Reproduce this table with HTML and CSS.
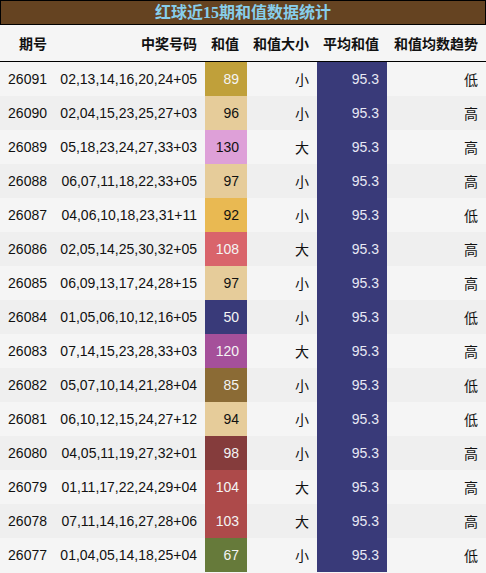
FILE: index.html
```html
<!DOCTYPE html>
<html lang="zh">
<head>
<meta charset="UTF-8">
<title>红球近15期和值数据统计</title>
<link rel="stylesheet" href="styles.css">
</head>
<body>

<div class="title">红球近15期和值数据统计</div>

<table class="stats">
  <colgroup>
    <col class="c-issue"><col class="c-nums"><col class="c-sum"><col class="c-size"><col class="c-avg"><col class="c-trend">
  </colgroup>
  <thead>
    <tr><th>期号</th><th>中奖号码</th><th>和值</th><th>和值大小</th><th>平均和值</th><th>和值均数趋势</th></tr>
  </thead>
  <tbody>
    <tr><td>26091</td><td>02,13,14,16,20,24+05</td><td class="sum s89">89</td><td>小</td><td class="avg">95.3</td><td>低</td></tr>
    <tr><td>26090</td><td>02,04,15,23,25,27+03</td><td class="sum s96">96</td><td>小</td><td class="avg">95.3</td><td>高</td></tr>
    <tr><td>26089</td><td>05,18,23,24,27,33+03</td><td class="sum s130">130</td><td>大</td><td class="avg">95.3</td><td>高</td></tr>
    <tr><td>26088</td><td>06,07,11,18,22,33+05</td><td class="sum s96">97</td><td>小</td><td class="avg">95.3</td><td>高</td></tr>
    <tr><td>26087</td><td>04,06,10,18,23,31+11</td><td class="sum s92">92</td><td>小</td><td class="avg">95.3</td><td>低</td></tr>
    <tr><td>26086</td><td>02,05,14,25,30,32+05</td><td class="sum s108">108</td><td>大</td><td class="avg">95.3</td><td>高</td></tr>
    <tr><td>26085</td><td>06,09,13,17,24,28+15</td><td class="sum s96">97</td><td>小</td><td class="avg">95.3</td><td>高</td></tr>
    <tr><td>26084</td><td>01,05,06,10,12,16+05</td><td class="sum s50">50</td><td>小</td><td class="avg">95.3</td><td>低</td></tr>
    <tr><td>26083</td><td>07,14,15,23,28,33+03</td><td class="sum s120">120</td><td>大</td><td class="avg">95.3</td><td>高</td></tr>
    <tr><td>26082</td><td>05,07,10,14,21,28+04</td><td class="sum s85">85</td><td>小</td><td class="avg">95.3</td><td>低</td></tr>
    <tr><td>26081</td><td>06,10,12,15,24,27+12</td><td class="sum s96">94</td><td>小</td><td class="avg">95.3</td><td>低</td></tr>
    <tr><td>26080</td><td>04,05,11,19,27,32+01</td><td class="sum s98">98</td><td>小</td><td class="avg">95.3</td><td>高</td></tr>
    <tr><td>26079</td><td>01,11,17,22,24,29+04</td><td class="sum s104">104</td><td>大</td><td class="avg">95.3</td><td>高</td></tr>
    <tr><td>26078</td><td>07,11,14,16,27,28+06</td><td class="sum s104">103</td><td>大</td><td class="avg">95.3</td><td>高</td></tr>
    <tr><td>26077</td><td>01,04,05,14,18,25+04</td><td class="sum s67">67</td><td>小</td><td class="avg">95.3</td><td>低</td></tr>
  </tbody>
</table>

</body>
</html>
```

FILE: styles.css
```css
body{
  margin:0; background:#f5f5f5; color:#111;
  font-family:"Liberation Sans","Noto Sans CJK SC",sans-serif;
}
.title{
  height:23px; line-height:23px;
  background:#654321; border:1px solid #000;
  color:#87ceeb; text-align:center;
  font-family:"Liberation Serif","Noto Sans CJK SC",serif;
  font-size:16px; font-weight:bold;
}
.stats{
  width:486px; border-collapse:collapse; table-layout:fixed;
  font-size:14px;
}
.c-issue{width:55px;}
.c-nums{width:150px;}
.c-sum{width:42px;}
.c-size{width:70px;}
.c-avg{width:70px;}
.c-trend{width:99px;}
.stats th, .stats td{
  padding:0 8px 0 0; text-align:right; white-space:nowrap;
}
.stats th{
  height:36px; font-weight:bold; color:#111;
  border-bottom:1px solid #000; background:#f5f5f5;
}
.stats td{height:34px;}
.stats tbody tr:nth-child(odd){background:#f5f5f5;}
.stats tbody tr:nth-child(even){background:#efefef;}

.avg{background:#393a79; color:#e8e8f4;}
.sum{color:#f4f4f4;}
.s89{background:#c0a03a;}
.s96{background:#e6cc9a; color:#111;}
.s130{background:#dea0d8; color:#111;}
.s92{background:#e9b952; color:#111;}
.s108{background:#d9646b;}
.s50{background:#393a79;}
.s120{background:#a5509a;}
.s85{background:#8b6b35;}
.s98{background:#853c3c;}
.s104{background:#ad4a4a;}
.s67{background:#667a3a;}
```
